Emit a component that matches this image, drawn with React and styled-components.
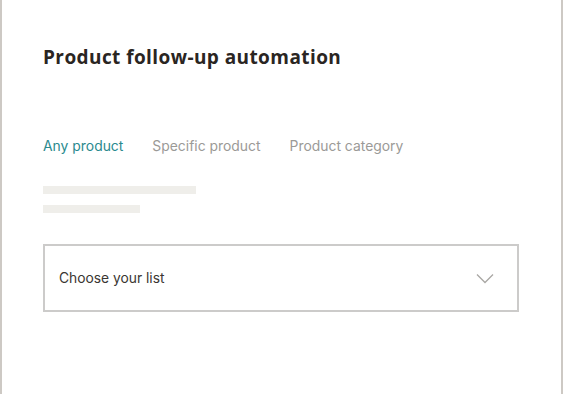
import React, { useState } from 'react';
import styled, { createGlobalStyle } from 'styled-components';

const GlobalStyle = createGlobalStyle`
  html, body {
    margin: 0;
    padding: 0;
    background: #ffffff;
  }
  body {
    font-family: 'Inter', 'Liberation Sans', sans-serif;
    -webkit-font-smoothing: antialiased;
  }
`;

const Panel = styled.div`
  box-sizing: border-box;
  width: 563px;
  height: 394px;
  border-left: 2px solid #cdc9c4;
  border-right: 2px solid #cdc9c4;
  padding: 44px 42px 0 41px;
  background: #fff;
`;

const Title = styled.h1`
  margin: 0;
  font-family: 'Open Sans', 'Liberation Sans', sans-serif;
  font-size: 19px;
  line-height: 26px;
  font-weight: 700;
  color: #2a2522;
  letter-spacing: 0.42px;
`;

const Tabs = styled.div`
  display: flex;
  gap: 29px;
  margin-top: 66px;
`;

const Tab = styled.button`
  border: none;
  background: none;
  padding: 0;
  font-family: inherit;
  font-size: 13.9px;
  line-height: 20px;
  color: ${({ active }) => (active ? '#2b8a8e' : '#9b9a97')};
  cursor: pointer;
`;

const Skeleton = styled.div`
  display: flex;
  flex-direction: column;
  gap: 11px;
  margin-top: 30px;
`;

const Bar = styled.div`
  width: ${({ w }) => w}px;
  height: 8px;
  background: #efeeea;
`;

const Select = styled.div`
  box-sizing: border-box;
  display: flex;
  align-items: center;
  justify-content: space-between;
  height: 68px;
  margin-top: 31px;
  padding: 0 23px 0 14px;
  border: 2px solid #cccbca;
  cursor: pointer;
`;

const SelectLabel = styled.span`
  font-size: 13.8px;
  color: #3a3632;
`;

const Chevron = () => (
  <svg width="18" height="11" viewBox="0 0 18 11" fill="none">
    <path d="M1 1.5 L9 9.5 L17 1.5" stroke="#a9a7a4" strokeWidth="1.3" />
  </svg>
);

const tabs = ['Any product', 'Specific product', 'Product category'];

export default function App() {
  const [active, setActive] = useState(0);

  return (
    <>
      <GlobalStyle />
      <Panel>
        <Title>Product follow-up automation</Title>
        <Tabs>
          {tabs.map((t, i) => (
            <Tab key={t} active={i === active} onClick={() => setActive(i)}>
              {t}
            </Tab>
          ))}
        </Tabs>
        <Skeleton>
          <Bar w={153} />
          <Bar w={97} />
        </Skeleton>
        <Select>
          <SelectLabel>Choose your list</SelectLabel>
          <Chevron />
        </Select>
      </Panel>
    </>
  );
}
